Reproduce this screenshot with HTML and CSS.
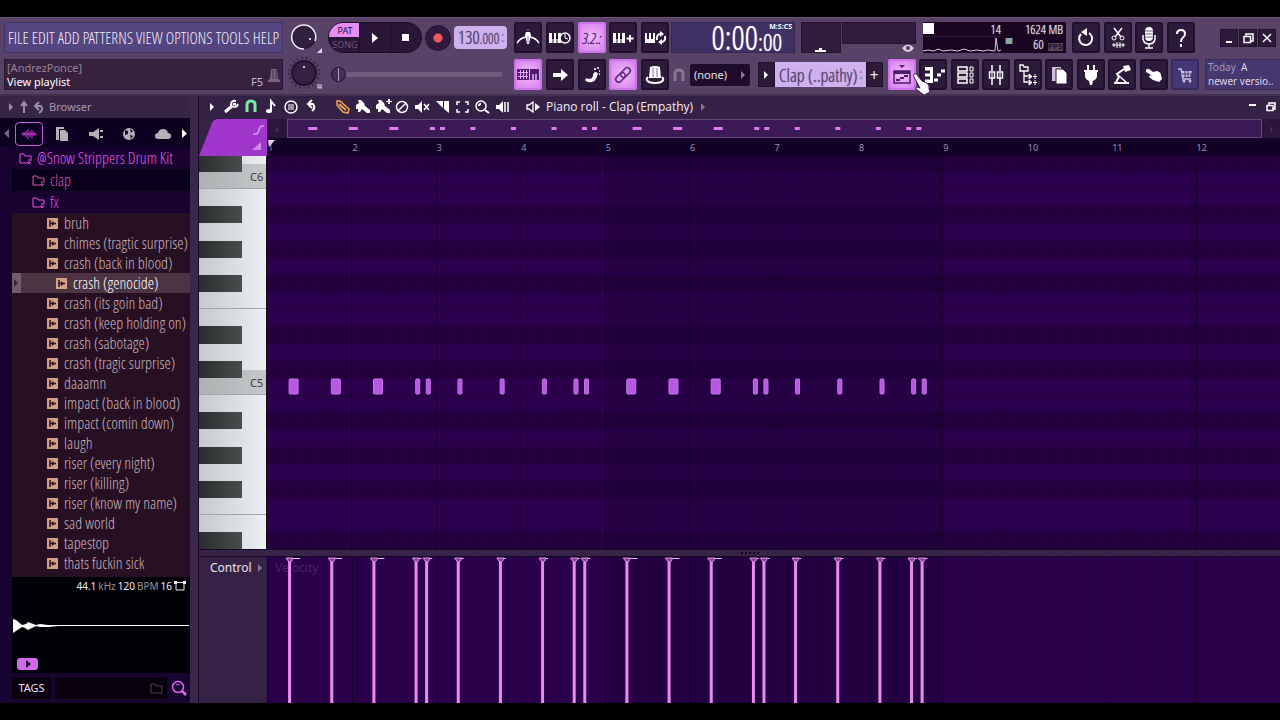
FILE: index.html
```html
<!DOCTYPE html>
<html lang="en">
<head>
<meta charset="utf-8">
<title>Piano roll - Clap (Empathy)</title>
<link rel="stylesheet" href="styles.css">
</head>
<body>
<div class="app">
  <header class="toolbar">
    <div class="stack info">
      <nav class="menu" aria-label="Main menu">
        <button>FILE</button><button>EDIT</button><button>ADD</button><button>PATTERNS</button><button>VIEW</button><button>OPTIONS</button><button>TOOLS</button><button>HELP</button>
      </nav>
      <div class="hint">
        <div class="hint-text"><span class="dim">[AndrezPonce]</span><span>View playlist</span></div>
        <span class="hint-key">F5</span>
        <svg width="12" height="16" viewBox="0 0 12 16"><path d="M3 2h6l1 10 2 1v2H0v-2l2-1z" fill="#75657f"/><path d="M5 3v9M8 3v9" stroke="#46304f"/></svg>
      </div>
    </div>

    <div class="stack knobs">
      <svg width="34" height="31" viewBox="0 0 34 31"><circle cx="16" cy="15" r="11" fill="#32203f" stroke="#2a1838" stroke-width="2"/><path d="M16 27A12 12 0 1 1 27 19" fill="none" stroke="#f1e9f6" stroke-width="1.500"/><circle cx="22" cy="17" r="1" fill="#fff"/><path d="M34 26v5h-5z" fill="#e0d4ea"/></svg>
      <svg width="34" height="33" viewBox="0 0 34 33"><circle cx="16" cy="16" r="15" fill="none" stroke="#32203f" stroke-width="2" stroke-dasharray="1.500 3"/><circle cx="16" cy="16" r="12" fill="#332042" stroke="#21102f" stroke-width="2"/><circle cx="16" cy="10" r="1" fill="#fff"/><path d="M30 27v4h4v-4M32 27v4" stroke="#e0d4ea" fill="none"/></svg>
    </div>

    <div class="stack transport">
      <div class="transport-row">
        <div class="play-group">
          <div class="mode"><button class="pat">PAT</button><button class="song">SONG</button></div>
          <button aria-label="Play"><svg width="10" height="12" viewBox="0 0 10 12"><path d="M2 1l6 5-6 5z" fill="#fff"/></svg></button>
          <button aria-label="Stop"><svg width="8" height="8" viewBox="0 0 8 8"><path d="M0 0h7v7H0z" fill="#fff"/></svg></button>
        </div>
        <button class="record" aria-label="Record"></button>
        <div class="tempo"><span>130<small>.000</small></span><svg width="6" height="12" viewBox="0 0 6 12"><path d="M1 4l2-3 2 3zM1 8l2 3 2-3z" fill="#a48fc0"/></svg></div>
      </div>
      <input class="slider" type="range" min="0" max="100" value="0" aria-label="Song position">
    </div>

    <div class="stack pads">
      <div class="pad-row">
        <button class="pad" aria-label="Metronome"><svg viewBox="0 0 24 24"><path d="M1 17q3-5 9-6M23 17q-3-5-9-6" fill="none" stroke="#fff" stroke-width="1.500"/><path d="M10 6h4l1 3-2 9h-2L9 9z" fill="#fff"/><path d="M12 5V3M12 10v7" stroke="#6c8fc4"/></svg></button>
        <button class="pad" aria-label="Wait for input"><svg viewBox="0 0 24 24"><path d="M1 7h12v10H1z" fill="#fff"/><path d="M5 13v4M9 13v4" stroke="#2a1838"/><path d="M5 7v6M9 7v6" stroke="#2a1838" stroke-width="2"/><circle cx="17" cy="12" r="5" fill="#2a1838" stroke="#fff" stroke-width="1.500"/><path d="M17 8v4l3 1" stroke="#fff" fill="none"/></svg></button>
        <button class="pad on seg" aria-label="Countdown">3.2.:</button>
        <button class="pad" aria-label="Overdub"><svg viewBox="0 0 24 24"><path d="M2 7h12v10H2z" fill="#fff"/><path d="M6 7v6M10 7v6" stroke="#2a1838" stroke-width="2"/><path d="M6 13v4M10 13v4" stroke="#2a1838"/><path d="M19 9v7M15.500 12.500h7" stroke="#fff" stroke-width="2"/></svg></button>
        <button class="pad" aria-label="Loop record"><svg viewBox="0 0 24 24"><path d="M2 7h10v10H2z" fill="#fff"/><path d="M5 7v6M9 7v6" stroke="#2a1838" stroke-width="2"/><path d="M14 14q-1-6 4-6M22 10q1 6-4 6" fill="none" stroke="#fff" stroke-width="2"/><path d="M17 5l4 3-4 3zM19 13l-4 3 4 3z" fill="#fff"/></svg></button>
      </div>
      <div class="pad-row">
        <button class="pad on" aria-label="Typing keyboard"><svg viewBox="0 0 24 24"><path d="M1 6h12v11H1z" fill="#4b1d6b"/><path d="M2 9.500h10M2 13.500h10M4.500 7v9M7.500 7v9M10.500 7v9" stroke="#eaa9fb"/><path d="M14 6h9v11h-9z" fill="#4b1d6b"/><path d="M17 11v6M20 11v6" stroke="#eaa9fb" stroke-width="1.500"/></svg></button>
        <button class="pad" aria-label="Step"><svg viewBox="0 0 24 24"><path d="M5 10h8V6l7 6-7 6v-4H5z" fill="#fff"/></svg></button>
        <button class="pad" aria-label="Slide"><svg viewBox="0 0 24 24"><path d="M5 17q1-3 4-1 3 0 4-3 0-4 3-4 3 1 1 4-1 5-5 6-5 1-7-2z" fill="#fff"/><path d="M14 6h2M17 5h2M19 8h1M19 11h1" stroke="#fff" stroke-width="1.500"/></svg></button>
        <button class="pad on" aria-label="Link"><svg viewBox="0 0 24 24"><g fill="none" stroke="#5c2a7c" stroke-width="1.500" transform="rotate(-45 12 12)"><rect x="3" y="9" width="11" height="6" rx="3"/><rect x="10" y="9" width="11" height="6" rx="3"/></g></svg></button>
        <button class="pad" aria-label="Multilink"><svg viewBox="0 0 24 24"><path d="M7 4q5-2 10 0l1 11H6z" fill="#fff"/><path d="M10 5v9M14 5v9" stroke="#7b6c98"/><path d="M5 14q-3 3 1 5 6 2 12 0 4-2 1-5" fill="none" stroke="#fff" stroke-width="2"/></svg></button>
      </div>
    </div>

    <div class="stack right">
      <div class="right-row top">
        <div class="clock"><span class="big">0:00</span><span class="cs"><small>M:S:CS</small><span class="mid">:00</span></span></div>
        <div class="peak"><svg width="14" height="4" viewBox="0 0 14 4"><path d="M1 4V2h4V0h3v2h4v2z" fill="#fff"/></svg></div>
        <div class="scope-col"><div class="scope"></div><svg width="12" height="9" viewBox="0 0 12 9"><path d="M0 4q6-7 12 0-6 8-12 0z" fill="#d8cfdf"/><circle cx="6" cy="4" r="2" fill="#513b60"/></svg></div>
        <div class="cpu">
          <svg class="cpu-wave" width="78" height="31" viewBox="0 0 78 31"><path d="M0 1h11v11H0z" fill="#fff"/><path d="M0 14.500h78" stroke="#31183f"/><path d="M0 29l5-1 6 1 4-2 5 2 8-1 7 1 6-2 6 2 7-1 6 1 5-1 7 1 1-13 2 13 3-1" stroke="#d5cadc" fill="none"/></svg>
          <span class="cpu-n">14</span><span class="cpu-mem">1624 MB</span>
          <svg class="chip" width="8" height="8" viewBox="0 0 8 8"><path d="M1 1h6v6H1z" fill="#9bb5ad"/><path d="M0 2h8M0 4h8M0 6h8" stroke="#78998e"/></svg>
          <span class="cpu-fps">60 <b>FPS</b></span>
        </div>
        <div class="pad-row four">
          <button class="pad" aria-label="Undo"><svg viewBox="0 0 24 24"><path d="M7 8a6.500 6.500 0 1 0 8-1" fill="none" stroke="#fff" stroke-width="2"/><path d="M13 2v8L7 6z" fill="#fff"/></svg></button>
          <button class="pad" aria-label="Cut"><svg viewBox="0 0 24 24"><path d="M8 2l7 9M16 2L9 11" stroke="#fff" stroke-width="1.500"/><circle cx="8" cy="12" r="2" stroke="#fff" fill="none"/><circle cx="16" cy="12" r="2" stroke="#fff" fill="none"/><path d="M6 19h13M8 17v4M11 16v6M14 16v6M17 17v4" stroke="#fff"/></svg></button>
          <button class="pad" aria-label="Microphone"><svg viewBox="0 0 24 24"><rect x="8" y="1" width="8" height="14" rx="4" fill="#fff"/><path d="M8 5h8M8 8h8M8 11h8" stroke="#715d90"/><path d="M6 9v4q1 5 6 5t6-5V9M12 18v4M8 22h8" stroke="#fff" fill="none" stroke-width="1.500"/></svg></button>
          <button class="pad" aria-label="Help"><svg viewBox="0 0 24 24"><path d="M8 8q0-4 4-4t4 4q0 2-2 3.500T12 16" fill="none" stroke="#fff" stroke-width="2"/><path d="M11 18h2v3h-2z" fill="#fff"/></svg></button>
        </div>
        <div class="winbtns">
          <button aria-label="Minimize"><svg width="16" height="16" viewBox="0 0 16 16"><path d="M5 12h6" stroke="#fff" stroke-width="2"/></svg></button>
          <button aria-label="Restore"><svg width="16" height="16" viewBox="0 0 16 16"><path d="M6 6V4h7v7h-2M4 6.500h6.500v6H4z" fill="none" stroke="#fff" stroke-width="1.500"/></svg></button>
          <button aria-label="Close"><svg width="16" height="16" viewBox="0 0 16 16"><path d="M4 4l8 8M12 4l-8 8" stroke="#fff" stroke-width="1.500"/></svg></button>
        </div>
      </div>
      <div class="right-row bottom">
        <svg width="12" height="14" viewBox="0 0 12 14"><path d="M2 13V6q0-4 4-4t4 4v7" fill="none" stroke="#877790" stroke-width="3"/></svg>
        <button class="snap">(none)<svg width="5" height="8" viewBox="0 0 5 8"><path d="M0 0l4 4-4 4z" fill="#8d7a9b"/></svg></button>
        <div class="pattern">
          <button aria-label="Pattern menu"><svg width="5" height="8" viewBox="0 0 5 8"><path d="M0 0l4 4-4 4z" fill="#fff"/></svg></button>
          <span class="pattern-name">Clap (..pathy)<svg width="6" height="14" viewBox="0 0 6 14"><path d="M1 5l2-3 2 3zM1 9l2 3 2-3z" fill="#a48fc0"/></svg></span>
          <button class="plus">+</button>
        </div>
        <div class="pad-row ten">
          <button class="pad on" aria-label="View playlist"><svg viewBox="0 0 24 24"><path d="M9 2h6l-3 3z" fill="#4b1d6b"/><path d="M4 8h16v12H4z" fill="none" stroke="#4b1d6b" stroke-width="1.500"/><path d="M4 9.500h16" stroke="#4b1d6b" stroke-width="3"/><path d="M6 17h4M10 15h4M14 13h4" stroke="#4b1d6b" stroke-width="2"/></svg></button>
          <button class="pad" aria-label="View piano roll"><svg viewBox="0 0 24 24"><path d="M4 4h8v16H4z" fill="#fff"/><path d="M4 9h5M4 15h5" stroke="#2a1838" stroke-width="3"/><path d="M13 17h4M16 12h4M20 8h4" stroke="#fff" stroke-width="3"/></svg></button>
          <button class="pad" aria-label="View channel rack"><svg viewBox="0 0 24 24"><path d="M5 4h9v4H5zM5 10h9v4H5zM5 16h9v4H5z" fill="none" stroke="#fff" stroke-width="1.500"/><path d="M17 4h3v4h-3zM17 10h3v4h-3zM17 16h3v4h-3z" fill="none" stroke="#fff"/></svg></button>
          <button class="pad" aria-label="View mixer"><svg viewBox="0 0 24 24"><path d="M8 2v6M8 15v7M16 2v6M16 15v7" stroke="#fff" stroke-width="1.500"/><path d="M5.500 9h5v6h-5zM13.500 9h5v6h-5z" fill="none" stroke="#fff" stroke-width="1.500"/><path d="M8 10v4M16 10v4" stroke="#fff"/></svg></button>
          <button class="pad" aria-label="View browser"><svg viewBox="0 0 24 24"><path d="M4 2h3l1 2h4v4H4zM8 8v11h4M8 13h4" fill="none" stroke="#fff" stroke-width="1.300"/><path d="M13 11v5l3-2.500zM13 17v5l3-2.500zM17 13.500h4M17 19.500h4M19 11v5M19 17v5" fill="#fff" stroke="#fff"/></svg></button>
          <button class="pad" aria-label="Project picker"><svg viewBox="0 0 24 24"><path d="M5 4h9v14H5z" fill="#cdbfe0"/><path d="M9 6h7l4 4v11H9z" fill="#fff" stroke="#2a1838"/></svg></button>
          <button class="pad" aria-label="Plugin picker"><svg viewBox="0 0 24 24"><path d="M9 2v6M15 2v6" stroke="#fff" stroke-width="2"/><path d="M5 7h14v2h-1v4q0 3-4 5l-1 4h-2l-1-4q-4-2-4-5V9H5z" fill="#fff"/></svg></button>
          <button class="pad" aria-label="Tempo tapper"><svg viewBox="0 0 24 24"><path d="M13 3l6-1 2 5-6 2zM4 19h15v2H4z" fill="#fff"/><path d="M14 6l-7 5 2 3-3 5" stroke="#fff" stroke-width="2" fill="none"/><path d="M8 12l8 7" stroke="#fff" stroke-width="1.500"/></svg></button>
          <button class="pad" aria-label="Touch"><svg viewBox="0 0 24 24"><path d="M4 7q1-2 3-1l4 3 4-1q4 1 4 4l1 4-3 3-6-2-4-3 1-2 3 1-7-4z" fill="#fff"/></svg></button>
          <button class="pad shop" aria-label="Shop"><svg viewBox="0 0 24 24"><path d="M5 6h3l2 10h8" fill="none" stroke="#cbbfe0" stroke-width="1.500"/><path d="M8 8h11l-2 6H9z" fill="#cbbfe0"/><path d="M12 8v6M15 8v6M8 11h10" stroke="#483b78"/><circle cx="11" cy="18" r="1.500" fill="#cbbfe0"/><circle cx="17" cy="18" r="1.500" fill="#cbbfe0"/></svg></button>
        </div>
        <div class="news"><span><i>Today</i> &nbsp;A</span><span>newer versio..</span></div>
      </div>
    </div>
    <svg class="cursor" width="20" height="24" viewBox="0 0 20 24"><path d="M2 2q2-1 3 1l5 6 5 2q3 3 2 6l1 3-6 3-8-6q-1-2 1-2l3 1L2 5q-1-2 0-3z" fill="#fff" stroke="#3b2250"/></svg>
  </header>

  <main class="workspace">
    <aside class="browser">
      <div class="browser-head">
        <svg width="36" height="14" viewBox="0 0 36 14"><path d="M1 3l4 4-4 4z" fill="#9b8ea6"/><path d="M16 13V3M13 6l3-4 3 4" stroke="#9b8ea6" stroke-width="2" fill="none"/><path d="M28 6h5q3 4-2 7M31 2l-4 4 4 4" stroke="#9b8ea6" stroke-width="2" fill="none"/></svg>
        <span>Browser</span>
      </div>
      <div class="tabs">
        <button class="arrow" aria-label="Previous tab"><svg width="5" height="9" viewBox="0 0 5 9"><path d="M5 0v9L0 4.500z" fill="#77697f"/></svg></button>
        <button class="tab active" aria-label="Sounds"><svg width="16" height="14" viewBox="0 0 16 14"><path d="M0 7h16M3 5v4M5 4v6M7 2v10M9 4v6M11 3v8M13 5v4" stroke="#d63de0"/></svg></button>
        <button class="tab" aria-label="Files"><svg width="14" height="14" viewBox="0 0 14 14"><path d="M1 0h8v2H4v11H1z" fill="#b4b0b6"/><path d="M5 3h5l3 3v8H5z" fill="#b4b0b6"/></svg></button>
        <button class="tab" aria-label="Plugins"><svg width="16" height="14" viewBox="0 0 16 14"><path d="M1 5h4l6-4v12L5 9H1zM12 3h3v2h-3zM12 9h3v2h-3z" fill="#b4b0b6"/></svg></button>
        <button class="tab" aria-label="Online"><svg width="14" height="14" viewBox="0 0 14 14"><circle cx="7" cy="7" r="6" fill="#b4b0b6"/><path d="M3 3l3 1v3L3 8zM8 2l3 2-2 2zM8 8l3 1-2 3z" fill="#19032f"/></svg></button>
        <button class="tab" aria-label="Cloud"><svg width="16" height="12" viewBox="0 0 16 12"><path d="M3 11q-3 0-3-3t3-3q1-4 5-4t5 4q3 0 3 3t-3 3z" fill="#b4b0b6"/></svg></button>
        <button class="arrow" aria-label="Next tab"><svg width="5" height="9" viewBox="0 0 5 9"><path d="M0 0v9l5-4.500z" fill="#fff"/></svg></button>
      </div>
      <div class="browser-body">
        <ul class="tree" id="tree">
          <li><button class="folder root">@Snow Strippers Drum Kit</button></li>
          <li><button class="folder sub dark">clap</button></li>
          <li><button class="folder sub">fx</button></li>
        </ul>
        <div class="preview">
          <p><b>44.1</b> kHz <b>120</b> BPM <b>16</b> <svg width="12" height="10" viewBox="0 0 12 10"><path d="M1.500 1.500h9M2 2v7h8V2" fill="none" stroke="#eee"/><path d="M0 0h3v3H0zM9 0h3v3H9z" fill="#eee"/></svg></p>
          <svg class="wave" height="16" viewBox="0 0 176 16" preserveAspectRatio="none"><path d="M0 1l3 1 6 5 4-1 2-2 8 3 4-1 8 1 10 0h131v1H45l-10 1-8 0-4-1-8 4-3-2-3-1-6 4-3 2z" fill="#fff"/></svg>
          <button class="preview-play" aria-label="Play preview"><svg width="8" height="8" viewBox="0 0 8 8"><path d="M2 0l5 4-5 4z" fill="#1b0626"/></svg></button>
        </div>
        <div class="tags">
          <button>TAGS</button>
          <label class="search"><input type="text" aria-label="Search tags"><svg width="13" height="11" viewBox="0 0 13 11"><path d="M1 1h4l1 2h6v7H1z" fill="none" stroke="#4c4153"/></svg></label>
          <svg width="16" height="16" viewBox="0 0 16 16"><circle cx="7" cy="7" r="5.500" fill="none" stroke="#d868ea" stroke-width="1.500"/><path d="M5 5q2-2 4 0" stroke="#d868ea" fill="none"/><path d="M11 11l4 4" stroke="#d868ea" stroke-width="2.500"/></svg>
        </div>
      </div>
    </aside>

    <section class="roll">
      <div class="roll-head">
        <svg class="tools" width="310" height="22" viewBox="0 0 310 22">
          <g fill="none" stroke="#fff" stroke-width="2">
            <path d="M10 7l4 4-4 4z" fill="#fff" stroke="none"/>
            <path d="M25 16l7-6" stroke-width="3"/><path d="M36 5q-5-1-5 4 2 3 6 1l1-2M33 8l3 0" stroke-width="2"/>
            <path d="M47 16V9q0-4 4-4t4 4v7" stroke="#79e9a0" stroke-width="3"/>
            <path d="M71 15V5l4 5" stroke-width="2"/><ellipse cx="69" cy="15" rx="3" ry="2" fill="#fff" stroke="none"/>
            <circle cx="91" cy="11" r="6" stroke-width="1.500"/><path d="M88 9h6M88 11h6M88 13h6" stroke-width="1"/>
            <path d="M108 8h5q3 4-1 7M112 4l-4 4 4 4"/>
            <path d="M137 5l3 0 9 8-1 4-5-1-6-7z" stroke="#f5a84e" stroke-width="1.500"/><path d="M139 8l7 6" stroke="#f5a84e"/>
            <g fill="#fff" stroke="none"><path id="brush" d="M156 9l3-2-1-3h3l3 3 1 3 5 4v3h-3l-5-4-2 3h-2v-3h-2z"/><use href="#brush" x="20"/><path d="M186 5h2V3h2v2h2v1h-2v2h-2V6h-2z"/></g>
            <circle cx="202" cy="11" r="5.500" stroke-width="1.500"/><path d="M198 15l8-8" stroke-width="1.500"/>
            <path d="M215 9h3l4-4v12l-4-4h-3z" fill="#fff" stroke="none"/><path d="M224 8l5 6M229 8l-5 6" stroke-width="1.500"/>
            <path d="M236 5h7v7zM244 5h5v12l-5-4z" fill="#fff" stroke="none"/>
            <path d="M257 9V6h3M265 6h3v3M268 13v3h-3M260 16h-3v-3" stroke-width="1.500"/>
            <circle cx="281" cy="10" r="5" stroke-width="1.500"/><path d="M285 14l4 3M279 10q0-2 2-2"/>
            <path d="M296 9h3l4-4v12l-4-4h-3z" fill="#fff" stroke="none"/><path d="M305 6v10M308 6v10" stroke-width="1.500"/>
          </g>
        </svg>
        <h1><svg width="15" height="14" viewBox="0 0 15 14"><path d="M1 5h2l4-3v10L3 9H1z" fill="none" stroke="#fff" stroke-width="1.300"/><path d="M9 3l5 4-5 4z" fill="#fff"/></svg>Piano roll - Clap (Empathy)<svg class="more" width="5" height="8" viewBox="0 0 5 8"><path d="M0 0l4 4-4 4z" fill="#85768f"/></svg></h1>
        <svg class="sub-win" width="30" height="14" viewBox="0 0 30 14"><path d="M3 5h7" stroke="#fff" stroke-width="2"/><path d="M23 5V3h6v6h-2M21 5.500h6v5h-6z" fill="none" stroke="#fff" stroke-width="1.500"/></svg>
      </div>
      <div class="roll-body">
        <div class="corner"><svg width="68" height="37" viewBox="0 0 68 37"><path d="M0 37L13 4q2-4 6-4h49v37z" fill="#a036cb"/><path d="M54 15h3q2 0 3-4t3-4h2" fill="none" stroke="#d59be9" stroke-width="1.500"/><path d="M62 23v8h-9z" fill="#d287ea"/></svg></div>
        <div class="nav-col">
          <div class="minimap"><button aria-label="Scroll left">‹</button><svg id="mini"></svg><button aria-label="Scroll right">›</button></div>
          <svg class="ruler" id="ruler"></svg>
        </div>
        <svg class="keys" id="keys"><defs><linearGradient id="white"><stop offset="0" stop-color="#c5c9cb"/><stop offset="1" stop-color="#eaf0f4"/></linearGradient><linearGradient id="black"><stop offset="0" stop-color="#292d2e"/><stop offset="1" stop-color="#484d4e"/></linearGradient></defs></svg>
        <svg class="grid" id="grid"></svg>
        <div class="splitter"><svg width="20" height="4" viewBox="0 0 20 4"><path d="M1 2h18" stroke="#14051c" stroke-width="2" stroke-dasharray="2 2"/></svg></div>
        <button class="control">Control<svg width="5" height="8" viewBox="0 0 5 8"><path d="M0 0l4 4-4 4z" fill="#85768f"/></svg></button>
        <div class="velocity"><svg id="velocity"></svg></div>
      </div>
    </section>
  </main>
</div>
<script src="app.js"></script>
</body>
</html>
```
FILE: styles.css
```css
:root { --narrow: "Open Sans Condensed Light", "Roboto Condensed", sans-serif; }
* { box-sizing: border-box; }
body { margin: 0; background: #000; color: #e9e2ee; font: 12px/14px "Noto Sans", "Open Sans", sans-serif; }
button { font: inherit; color: inherit; background: none; border: 0; padding: 0; margin: 0; }
svg { display: block; flex: none; }
.app { height: 100vh; min-height: 600px; padding: 17px 0; display: flex; flex-direction: column; overflow: hidden; }

.toolbar { position: relative; flex: none; display: flex; padding: 4px 0 4px 4px; background: #594268; border-top: 1px solid #6a5378; border-bottom: 2px solid #44304f; height: 79px; }
.stack { display: flex; flex-direction: column; gap: 6px; flex: none; }
.info { width: 279px; }
.menu { height: 31px; display: flex; align-items: center; justify-content: space-between; padding: 0 3px; background: #54447f; border: 1px solid #423469; color: #f0ecf8; font: 16px/20px var(--narrow); text-shadow: 0 0 1px currentColor; }
.hint { height: 31px; display: flex; align-items: center; background: #38213f; border: 1px solid #2b1834; padding: 0 2px; gap: 5px; font-size: 11px; }
.hint-text { flex: 1; display: flex; flex-direction: column; color: #fff; }
.hint .dim { color: #958399; }
.hint-key { align-self: flex-end; color: #c5b6cc; }
.knobs { width: 45px; padding-left: 5px; gap: 4px; }

.transport { width: 186px; }
.transport-row { display: flex; align-items: center; height: 31px; }
.play-group { display: flex; width: 94px; height: 31px; border-radius: 15px; background: #2a1637; overflow: hidden; border: 1px solid #1f0e2b; }
.play-group > button { flex: 1; display: grid; place-items: center; border-left: 1px solid #1c0b28; }
.mode { width: 30px; display: flex; flex-direction: column; font-size: 9px; line-height: 13px; }
.pat { background: #e58df4; color: #2a0e3a; height: 14px; padding-left: 2px; }
.song { color: #6c587a; height: 15px; padding-left: 2px; }
.record { width: 26px; height: 26px; margin: 0 3px; border-radius: 50%; background: radial-gradient(circle, #ee5962 4px, #301a3f 5px); border: 1px solid #26122f; }
.tempo { display: flex; align-items: center; justify-content: space-between; width: 53px; height: 23px; padding: 0 1px 0 4px; border-radius: 4px; background: #cfb1ee; color: #54406c; font: 18px/20px var(--narrow); text-shadow: 0 0 1px currentColor; }
.tempo small { font-size: 14px; }
.slider { appearance: none; width: 176px; height: 31px; margin: 0; background: none; }
.slider::-webkit-slider-runnable-track { height: 5px; background: linear-gradient(90deg, transparent 10px, #715b7f 10px, #715b7f 174px, transparent 174px); }
.slider::-webkit-slider-thumb { appearance: none; width: 15px; height: 15px; margin: -5px 0 0 3px; border-radius: 50%; border: 1px solid #1e0b2b; background: linear-gradient(90deg, #46305a 6px, #b39fc6 6px, #b39fc6 7px, #46305a 7px); }

.pads { width: 155px; }
.pad-row { display: flex; justify-content: space-between; flex: none; width: 155px; }
.pad-row.four { width: 123px; }
.pad-row.ten { width: 311px; }
.pad { width: 28px; height: 31px; display: grid; place-items: center; background: #2d1a3a; border: 2px solid #23102f; border-radius: 2px; }
.pad svg { width: 24px; height: 24px; }
.pad.on { background: radial-gradient(circle, #f3bcfb, #d77ff0); border-color: #cf73ea; color: #4b1d6b; }
.pad.shop { background: #453775; border-color: #372a60; }
.seg { font: italic 15px/16px var(--narrow); text-shadow: 0 0 1px currentColor; }

.right { flex: 1; min-width: 0; padding-left: 2px; }
.right-row { display: flex; height: 31px; }
.clock { width: 124px; margin-right: 6px; padding-right: 2px; display: flex; justify-content: flex-end; background: #403164; border: 1px solid #352653; color: #fff; font: 33px/30px var(--narrow); text-shadow: 0 0 1px currentColor; }
.clock .cs { display: flex; flex-direction: column; width: 34px; }
.clock .mid { font-size: 24px; line-height: 24px; }
.clock small { align-self: flex-end; font: bold 7px/7px "Noto Sans", sans-serif; text-shadow: none; }
.peak, .scope { background: #321c3d; border: 1px solid #29142f; }
.peak { width: 40px; display: grid; align-items: end; justify-items: center; margin-right: 1px; }
.scope-col { width: 74px; margin-right: 7px; display: flex; flex-direction: column; align-items: flex-end; }
.scope { width: 74px; height: 22px; }
.scope-col svg { margin-right: 2px; }
.cpu { width: 143px; margin-right: 6px; background: #190522; display: grid; grid-template: 15px 16px / 78px 1fr; font: 13px/15px var(--narrow); text-shadow: 0 0 1px currentColor; padding-right: 3px; }
.cpu-wave { grid-area: 1 / 1 / 3 / 2; }
.cpu-n { grid-area: 1 / 1; justify-self: end; }
.cpu-mem, .cpu-fps { grid-column: 2; justify-self: end; }
.chip { grid-area: 2 / 2; align-self: start; margin-left: 4px; }
.cpu-fps { grid-row: 2; }
.cpu-fps b { font: bold 7px/8px "DejaVu Sans", sans-serif; background: #514659; color: #221529; margin-left: 2px; text-shadow: none; }
.winbtns { display: flex; gap: 1px; margin-left: auto; padding-top: 7px; padding-right: 4px; }
.winbtns button { width: 18px; height: 18px; background: #2d1a3a; border: 1px solid #23102f; }
.bottom { align-items: center; }
.bottom > svg { margin: 0 5px 0 2px; }
.snap { width: 60px; height: 22px; display: flex; align-items: center; justify-content: space-between; padding: 0 4px; background: #1f0c2b; border-radius: 2px; font-size: 11px; margin-right: 8px; }
.pattern { display: flex; width: 124px; height: 25px; margin-right: 6px; }
.pattern button { width: 17px; flex: none; display: grid; place-items: center; background: #2d1a3a; border: 1px solid #23102f; }
.pattern-name { flex: 1; display: flex; justify-content: space-between; align-items: center; padding: 0 2px 0 4px; background: #cfb1ee; color: #54406c; white-space: nowrap; font: 18px/20px var(--narrow); text-shadow: 0 0 1px currentColor; }
.plus { font-size: 16px; }
.news { flex: 1; min-width: 0; height: 31px; margin-left: 6px; padding: 0 2px; background: #463770; border: 1px solid #3a2c5f; border-right: 0; display: flex; flex-direction: column; font-size: 10px; white-space: nowrap; overflow: hidden; color: #dcd4e6; }
.news i { font-style: normal; color: #a297bd; }
.cursor { position: absolute; left: 912px; top: 54px; }

.workspace { flex: 1; min-height: 0; display: flex; }
.browser { width: 198px; flex: none; display: flex; flex-direction: column; background: #190330; border-right: 8px solid #3b274a; }
.browser-head { height: 22px; display: flex; align-items: center; gap: 5px; padding-left: 8px; background: #382447; color: #a497ae; font-size: 11px; }
.tabs { height: 29px; display: flex; align-items: center; justify-content: space-between; padding: 2px 3px 0 4px; background: #0d0122; }
.tab { width: 28px; height: 24px; display: grid; place-items: center; }
.tab.active { border: 1px solid #c45bd8; border-radius: 4px; }
.browser-body { flex: 1; min-height: 0; margin-left: 12px; display: flex; flex-direction: column; }
.tree { list-style: none; margin: 0; padding: 0 0 4px; font: 16px/20px var(--narrow); text-shadow: 0 0 1px currentColor; white-space: nowrap; background: #281024; }
.tree button { width: 100%; display: flex; align-items: center; gap: 6px; text-align: left; overflow: hidden; }
.tree .folder { height: 22px; background: #180230; color: #e455e4; gap: 5px; }
.tree .root { padding-left: 7px; }
.tree .sub { padding-left: 20px; }
.tree .dark { background: #08001a; color: #de50b2; }
.file { height: 20px; padding-left: 35px; color: #c8b5be; }
.file.sel { padding-left: 0; background: #4c3443; color: #fff; }
.file.sel .grip { width: 9px; height: 20px; background: #705d69; margin-right: 29px; display: grid; place-items: center; }
.preview { flex: 1; min-height: 80px; background: #000007; display: flex; flex-direction: column; justify-content: space-between; padding: 2px 1px 3px; }
.preview p { display: flex; justify-content: flex-end; align-items: center; gap: 2px; margin: 0 3px; font-size: 10px; color: #9c958f; white-space: nowrap; }
.preview b { font-weight: 400; color: #f0ecee; }
.wave { width: 100%; }
.preview-play { width: 21px; height: 12px; margin-left: 4px; border-radius: 3px; background: #d468ea; display: grid; place-items: center; }
.tags { height: 30px; flex: none; display: flex; align-items: center; gap: 4px; padding-right: 3px; }
.tags button { width: 39px; height: 22px; background: #08000f; font-size: 11px; }
.search { flex: 1; min-width: 0; height: 22px; display: flex; align-items: center; background: #08000f; padding-right: 4px; }
.search input { flex: 1; min-width: 0; border: 0; background: none; color: #fff; }

.roll { flex: 1; min-width: 0; display: flex; flex-direction: column; background: #362247; border-left: 1px solid #1b0a28; }
.roll-head { height: 23px; flex: none; display: flex; align-items: center; background: #352146; padding-bottom: 2px; }
.tools { margin-left: 1px; }
.roll-head h1 { margin: 0 auto 0 16px; display: flex; align-items: center; gap: 5px; font: 12px/16px "Open Sans", "Noto Sans", sans-serif; color: #f4eff7; }
.more { margin-left: 3px; }
.sub-win { margin-right: 4px; }
.roll-body { flex: 1; min-height: 0; display: grid; grid-template: 37px 1fr 8px 146px / 68px 1fr; }
.nav-col { display: flex; flex-direction: column; background: #120026; }
.minimap { display: flex; height: 19px; }
.minimap button { width: 20px; background: #2a163b; color: #57436a; }
.minimap button:last-child { width: 18px; }
.minimap svg { flex: 1; min-width: 0; height: 19px; background: #3c1a56; border: 1px solid #69477f; }
.ruler { width: 100%; height: 18px; }
.ruler text { fill: #9d90ac; font: 9px "Noto Sans", sans-serif; }
.keys { width: 68px; height: 100%; border-right: 1px solid #111; }
.keys text { fill: #3c3c40; font: 11px "Noto Sans", sans-serif; }
.grid { width: 100%; height: 100%; background: #2d004d; }
.splitter { grid-column: 1 / -1; display: grid; place-items: center; background: #382447; border-top: 1px solid #170525; border-bottom: 1px solid #170525; }
.splitter svg { margin-left: 20px; }
.control { display: flex; justify-content: space-between; align-items: center; height: 22px; padding: 0 4px 0 11px; color: #e9e2ee; }
.velocity { background: #2a004a; overflow: hidden; border-left: 1px solid #15002a; }
.velocity svg { width: 100%; height: 100%; }
.velocity text { fill: #4d2468; font: 12px "Noto Sans", sans-serif; }
```
FILE: app.js
```javascript
const NS = 'http://www.w3.org/2000/svg';
const BARS = 12;
const pct = bars => (bars / BARS * 100) + '%';

function add(parent, tag, attrs, text) {
  const el = document.createElementNS(NS, tag);
  for (const k in attrs) el.setAttribute(k, attrs[k]);
  if (text) el.textContent = text;
  parent.append(el);
  return el;
}
const byId = id => document.getElementById(id);

// Browser file list
const files = ['bruh', 'chimes (tragtic surprise)', 'crash (back in blood)', 'crash (genocide)', 'crash (its goin bad)',
  'crash (keep holding on)', 'crash (sabotage)', 'crash (tragic surprise)', 'daaamn', 'impact (back in blood)',
  'impact (comin down)', 'laugh', 'riser (every night)', 'riser (killing)', 'riser (know my name)', 'sad world',
  'tapestop', 'thats fuckin sick'];
const fileIcon = '<svg width="11" height="11" viewBox="0 0 11 11"><path d="M0 0h11v11H0z" fill="#d2a184"/><path d="M3 2v7M3 5.500h6" stroke="#2a1125" stroke-width="1.500"/><path d="M5 3v5l3-2.500z" fill="#2a1125"/></svg>';
const folderIcon = '<svg width="13" height="13" viewBox="0 0 13 13"><path d="M8 11H1V2h4l1 2h6v5M10 7v5M8 10l2 2 2-2" fill="none" stroke="currentColor"/></svg>';
const grip = '<span class="grip"><svg width="5" height="8" viewBox="0 0 5 8"><path d="M0 0l4 4-4 4z" fill="#3a2535"/></svg></span>';
document.querySelectorAll('.folder').forEach(f => f.insertAdjacentHTML('afterbegin', folderIcon));
files.forEach((name, i) => {
  const li = document.createElement('li');
  const sel = i === 3;
  li.innerHTML = `<button class="file${sel ? ' sel' : ''}">${sel ? grip : ''}${fileIcon}<span>${name}</span></button>`;
  byId('tree').append(li);
});

const half = [[0.25, 2], [0.75, 2], [1.25, 2], [1.75, 1], [1.875, 1], [2.25, 1], [2.75, 1], [3.25, 1], [3.625, 1], [3.75, 1]];
const notes = half.concat(half.map(([s, l]) => [s + 4, l]));

const strongBars = [1, 2, 4, 5, 8, 11];
function gridLines(svg) {
  add(svg, 'rect', { x: pct(4), y: 0, width: pct(4), height: '100%', fill: '#10002c', opacity: 0.22 });
  for (let s = 1; s < BARS * 16; s++) {
    const bar = s % 16 === 0, beat = s % 4 === 0;
    add(svg, 'rect', { x: pct(s / 16), y: 0, width: 1, height: '100%', fill: '#0c0020',
      opacity: bar ? (strongBars.includes(s / 16) ? 0.8 : 0.3) : beat ? 0.22 : 0.1, 'shape-rendering': 'crispEdges' });
  }
}

const grid = byId('grid'), keys = byId('keys'), velocity = byId('velocity'), mini = byId('mini'), ruler = byId('ruler');

// Rows run down from C#6
const names = ['C#', 'C', 'B', 'A#', 'A', 'G#', 'G', 'F#', 'F', 'E', 'D#', 'D'];
const rowTop = i => Math.round(i * 17.17 - 1.3);
add(keys, 'rect', { width: '100%', height: '100%', fill: 'url(#white)' });
for (let i = 0; i < 30; i++) {
  const y = rowTop(i), h = rowTop(i + 1) - y, name = names[i % 12];
  if (name === 'C') {
    add(keys, 'rect', { x: 0, y: y - 8, width: 68, height: h + 8, fill: '#8c8c8c', opacity: 0.4 });
    add(keys, 'text', { x: 51, y: y + 9 }, 'C' + (i < 12 ? 6 : 5));
  }
  if (name === 'C' || name === 'F') add(keys, 'rect', { x: 0, y: y + h - 1, width: 68, height: 1, fill: '#a3a6a8' });
}
for (let i = 0; i < 30; i++) {
  const y = rowTop(i), h = rowTop(i + 1) - y;
  if (names[i % 12].includes('#')) {
    add(keys, 'rect', { x: 0, y, width: 43, height: h, fill: 'url(#black)' });
    add(grid, 'rect', { x: 0, y, width: '100%', height: h, fill: '#24003f' });
  }
}
gridLines(grid);
gridLines(velocity);
for (const i of [2, 9, 14]) add(grid, 'rect', { x: 0, y: rowTop(i), width: '100%', height: 1, fill: '#1c0038', opacity: 0.6 });

for (let b = 0; b < BARS; b++) add(ruler, 'text', { x: pct(b), dx: 1, y: 13 }, String(b + 1));
add(ruler, 'path', { d: 'M1 2h7L2 9z', fill: '#d9d0e2' });

add(velocity, 'text', { x: 7, y: 15 }, 'Velocity');
for (const [start, len] of notes) {
  const w = len === 2 ? 9 : 4;
  add(grid, 'rect', { x: pct(start), y: rowTop(13) + 1, width: w, height: 15, rx: 1, fill: '#b658e2', stroke: '#c478e8', transform: 'translate(1 0)' });
  add(mini, 'rect', { x: pct(start), y: 7, width: len === 2 ? 9 : 5, height: 3, fill: '#e07af4' });
  const g = add(velocity, 'svg', { x: pct(start), y: 0 });
  g.style.overflow = 'visible';
  add(g, 'rect', { x: -1, y: 2, width: 3, height: '100%', fill: '#ea8af2' });
  add(g, 'rect', { x: -3, y: 1, width: w + 5, height: 1, fill: '#e5bff0' });
  add(g, 'path', { d: 'M-3 1h7q-1 4-3 4t-4-4z', fill: '#8e3a9c', stroke: '#d795e2' });
}
```
